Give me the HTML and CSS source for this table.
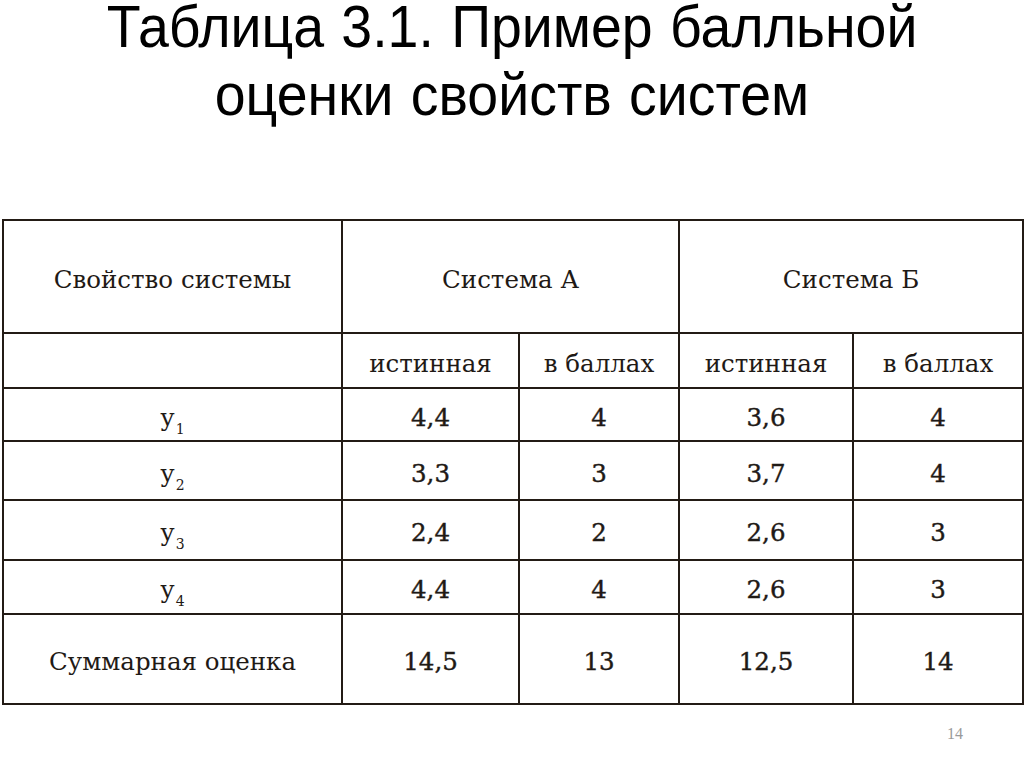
FILE: index.html
```html
<!DOCTYPE html>
<html lang="ru">
<head>
<meta charset="utf-8">
<title>Таблица 3.1</title>
<link rel="stylesheet" href="styles.css">
</head>
<body>
<div class="slide">
  <h1 class="title"><span class="line line1">Таблица 3.1. Пример балльной</span><span class="line line2">оценки свойств систем</span></h1>
  <table class="scores">
    <colgroup>
      <col class="c1"><col class="c2"><col class="c3"><col class="c4"><col class="c5">
    </colgroup>
    <tr class="r-head">
      <td>Свойство системы</td>
      <td colspan="2">Система А</td>
      <td colspan="2">Система Б</td>
    </tr>
    <tr class="r-sub">
      <td></td>
      <td>истинная</td>
      <td>в баллах</td>
      <td>истинная</td>
      <td>в баллах</td>
    </tr>
    <tr class="r-y1">
      <td class="lbl">у<sub>1</sub></td><td class="num">4,4</td><td class="num">4</td><td class="num">3,6</td><td class="num">4</td>
    </tr>
    <tr class="r-y2">
      <td class="lbl">у<sub>2</sub></td><td class="num">3,3</td><td class="num">3</td><td class="num">3,7</td><td class="num">4</td>
    </tr>
    <tr class="r-y3">
      <td class="lbl">у<sub>3</sub></td><td class="num">2,4</td><td class="num">2</td><td class="num">2,6</td><td class="num">3</td>
    </tr>
    <tr class="r-y4">
      <td class="lbl">у<sub>4</sub></td><td class="num">4,4</td><td class="num">4</td><td class="num">2,6</td><td class="num">3</td>
    </tr>
    <tr class="r-sum">
      <td>Суммарная оценка</td><td class="num">14,5</td><td class="num">13</td><td class="num">12,5</td><td class="num">14</td>
    </tr>
  </table>
  <div class="page-num">14</div>
</div>
</body>
</html>
```

FILE: styles.css
```css
html, body {
  margin: 0;
  padding: 0;
  background: #ffffff;
}

.slide {
  width: 1024px;
  height: 767px;
  position: relative;
  overflow: hidden;
}

.title {
  margin: 0;
  font-family: "Liberation Sans", Arial, sans-serif;
  font-weight: normal;
  font-size: 59px;
  color: #000;
  text-align: center;
}

.title .line {
  display: block;
  transform: scaleX(0.94);
  white-space: nowrap;
  word-spacing: 2px;
}

.title .line1 { line-height: 54px; }
.title .line2 { line-height: 82px; }

.scores {
  margin: 83px 0 0 2px;
  width: 1020px;
  border-collapse: collapse;
  table-layout: fixed;
  font-family: "DejaVu Serif", "Liberation Serif", serif;
  font-size: 24.5px;
  color: #1f1a16;
}

.scores td {
  border: 2px solid #231b15;
  text-align: center;
  vertical-align: middle;
  padding: 5px 0 0 0;
}

.c1 { width: 339px; }
.c2 { width: 177px; }
.c3 { width: 160px; }
.c4 { width: 174px; }
.c5 { width: 170px; }

.r-head td { height: 106px; }
.r-sub td { height: 48px; }
.r-y1 td { height: 46px; }
.r-y2 td { height: 52px; }
.r-y3 td { height: 53px; }
.r-y4 td { height: 47px; }
.r-sum td { height: 83px; }

.lbl sub {
  font-size: 14px;
  vertical-align: -8px;
  line-height: 0;
  margin-left: 1px;
}

.num {
  -webkit-text-stroke: 0.4px #1f1a16;
}

.page-num {
  position: absolute;
  left: 947px;
  top: 725px;
  font-family: "Liberation Serif", serif;
  font-size: 16px;
  color: #9a9a9a;
}
```
